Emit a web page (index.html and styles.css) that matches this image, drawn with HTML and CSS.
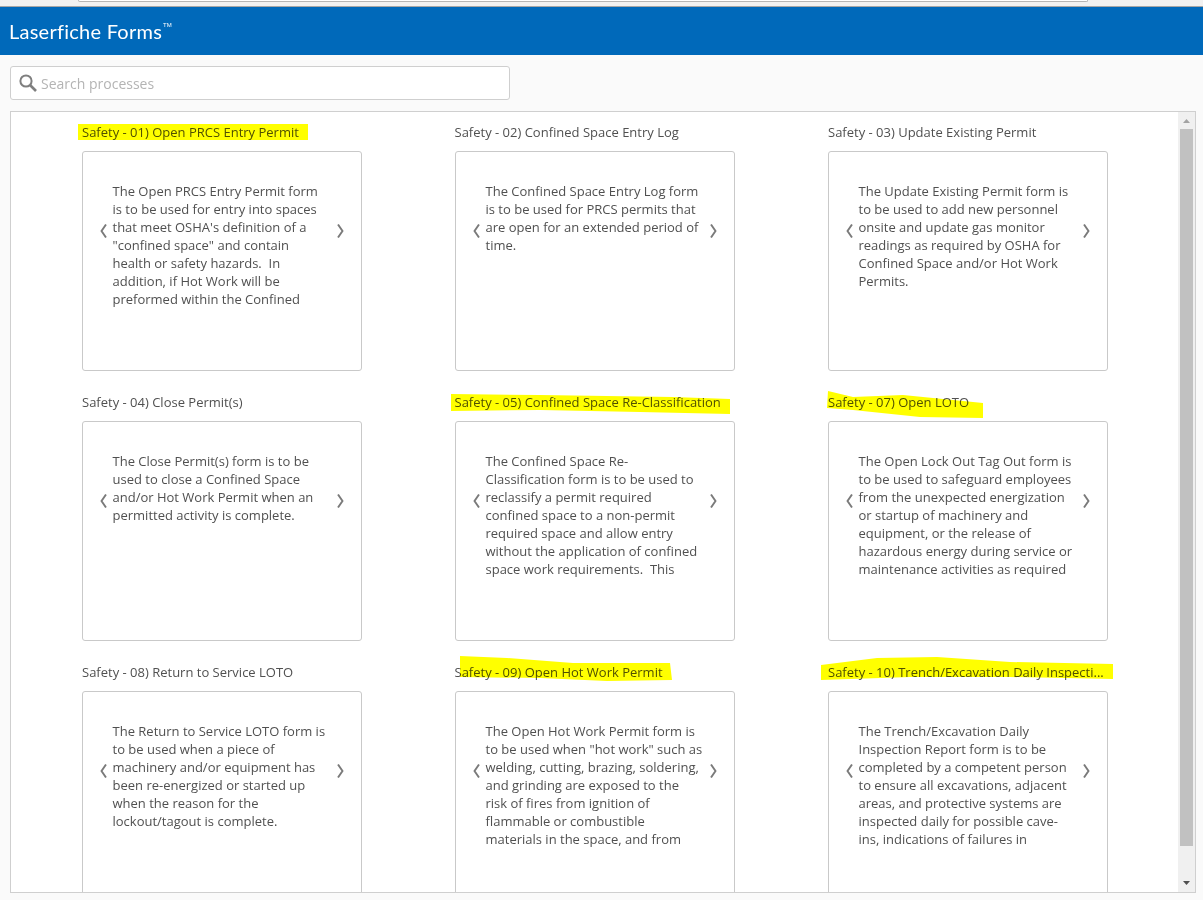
FILE: index.html
```html
<!DOCTYPE html>
<html lang="en">
<head>
<meta charset="utf-8">
<title>Laserfiche Forms</title>
<link rel="stylesheet" href="styles.css">
</head>
<body>
<div class="chrome"><div class="urlbar"></div></div>
<header class="banner"><span class="brand">Laserfiche Forms</span><sup class="tm">TM</sup></header>
<main class="page">
  <div class="search">
    <svg class="search-icon" width="20" height="20" viewBox="0 0 20 20"><circle cx="8" cy="8" r="5.6" fill="none" stroke="#7f7f7f" stroke-width="2"/><path d="M12 12l6 6" stroke="#7f7f7f" stroke-width="2.6" fill="none"/></svg>
    <span class="placeholder">Search processes</span>
  </div>
  <section class="panel">
    <div class="list">
      <div class="grid">
        <article class="item">
          <h2 class="title"><span>Safety - 01) Open PRCS Entry Permit</span><svg class="hl" viewBox="0 0 1203 900"><polygon points="78,124 308,124 308,140 78,140"/></svg></h2>
          <div class="card"><svg class="nav" width="7" height="14" viewBox="0 0 7 14"><path d="M6 0.5L1.5 7L6 13.5"/></svg><p>The Open PRCS Entry Permit form is to be used for entry into spaces that meet OSHA's definition of a "confined space" and contain health or safety hazards.&nbsp; In addition, if Hot Work will be preformed within the Confined</p><svg class="nav" width="7" height="14" viewBox="0 0 7 14"><path d="M1 0.5L5.5 7L1 13.5"/></svg></div>
        </article>
        <article class="item">
          <h2 class="title"><span>Safety - 02) Confined Space Entry Log</span></h2>
          <div class="card"><svg class="nav" width="7" height="14" viewBox="0 0 7 14"><path d="M6 0.5L1.5 7L6 13.5"/></svg><p>The Confined Space Entry Log form is to be used for PRCS permits that are open for an extended period of time.</p><svg class="nav" width="7" height="14" viewBox="0 0 7 14"><path d="M1 0.5L5.5 7L1 13.5"/></svg></div>
        </article>
        <article class="item">
          <h2 class="title"><span>Safety - 03) Update Existing Permit</span></h2>
          <div class="card"><svg class="nav" width="7" height="14" viewBox="0 0 7 14"><path d="M6 0.5L1.5 7L6 13.5"/></svg><p>The Update Existing Permit form is to be used to add new personnel onsite and update gas monitor readings as required by OSHA for Confined Space and/or Hot Work Permits.</p><svg class="nav" width="7" height="14" viewBox="0 0 7 14"><path d="M1 0.5L5.5 7L1 13.5"/></svg></div>
        </article>
        <article class="item">
          <h2 class="title"><span>Safety - 04) Close Permit(s)</span></h2>
          <div class="card"><svg class="nav" width="7" height="14" viewBox="0 0 7 14"><path d="M6 0.5L1.5 7L6 13.5"/></svg><p>The Close Permit(s) form is to be used to close a Confined Space and/or Hot Work Permit when an permitted activity is complete.</p><svg class="nav" width="7" height="14" viewBox="0 0 7 14"><path d="M1 0.5L5.5 7L1 13.5"/></svg></div>
        </article>
        <article class="item">
          <h2 class="title"><span>Safety - 05) Confined Space Re-Classification</span><svg class="hl" viewBox="0 0 1203 900"><polygon points="451,394 540,395 673,397 730,399 730,414 640,412 540,410 451,411"/></svg></h2>
          <div class="card"><svg class="nav" width="7" height="14" viewBox="0 0 7 14"><path d="M6 0.5L1.5 7L6 13.5"/></svg><p>The Confined Space Re-Classification form is to be used to reclassify a permit required confined space to a non-permit required space and allow entry without the application of confined space work requirements.&nbsp; This</p><svg class="nav" width="7" height="14" viewBox="0 0 7 14"><path d="M1 0.5L5.5 7L1 13.5"/></svg></div>
        </article>
        <article class="item">
          <h2 class="title"><span>Safety - 07) Open LOTO</span><svg class="hl" viewBox="0 0 1203 900"><polygon points="828,391 853,397 903,395 983,403 983,418 920,417 853,410 827,408"/></svg></h2>
          <div class="card"><svg class="nav" width="7" height="14" viewBox="0 0 7 14"><path d="M6 0.5L1.5 7L6 13.5"/></svg><p>The Open Lock Out Tag Out form is to be used to safeguard employees from the unexpected energization or startup of machinery and equipment, or the release of hazardous energy during service or maintenance activities as required</p><svg class="nav" width="7" height="14" viewBox="0 0 7 14"><path d="M1 0.5L5.5 7L1 13.5"/></svg></div>
        </article>
        <article class="item">
          <h2 class="title"><span>Safety - 08) Return to Service LOTO</span></h2>
          <div class="card"><svg class="nav" width="7" height="14" viewBox="0 0 7 14"><path d="M6 0.5L1.5 7L6 13.5"/></svg><p>The Return to Service LOTO form is to be used when a piece of machinery and/or equipment has been re-energized or started up when the reason for the lockout/tagout is complete.</p><svg class="nav" width="7" height="14" viewBox="0 0 7 14"><path d="M1 0.5L5.5 7L1 13.5"/></svg></div>
        </article>
        <article class="item">
          <h2 class="title"><span>Safety - 09) Open Hot Work Permit</span><svg class="hl" viewBox="0 0 1203 900"><polygon points="460,656 507,658 573,663 670,663 672,680 607,681 540,678 460,677"/></svg></h2>
          <div class="card"><svg class="nav" width="7" height="14" viewBox="0 0 7 14"><path d="M6 0.5L1.5 7L6 13.5"/></svg><p>The Open Hot Work Permit form is to be used when "hot work" such as welding, cutting, brazing, soldering, and grinding are exposed to the risk of fires from ignition of flammable or combustible materials in the space, and from</p><svg class="nav" width="7" height="14" viewBox="0 0 7 14"><path d="M1 0.5L5.5 7L1 13.5"/></svg></div>
        </article>
        <article class="item">
          <h2 class="title"><span>Safety - 10) Trench/Excavation Daily Inspecti...</span><svg class="hl" viewBox="0 0 1203 900"><polygon points="821,665 877,658 937,657 1010,662 1113,664 1113,679 1010,677 910,677 821,680"/></svg></h2>
          <div class="card"><svg class="nav" width="7" height="14" viewBox="0 0 7 14"><path d="M6 0.5L1.5 7L6 13.5"/></svg><p>The Trench/Excavation Daily Inspection Report form is to be completed by a competent person to ensure all excavations, adjacent areas, and protective systems are inspected daily for possible cave-ins, indications of failures in</p><svg class="nav" width="7" height="14" viewBox="0 0 7 14"><path d="M1 0.5L5.5 7L1 13.5"/></svg></div>
        </article>
      </div>
    </div>
    <div class="scrollbar">
      <svg class="arrow" width="7" height="4" viewBox="0 0 7 4"><path d="M3.5 0L7 4H0z" fill="#a3a3a3"/></svg>
      <div class="track"><div class="thumb"></div></div>
      <svg class="arrow" width="7" height="4" viewBox="0 0 7 4"><path d="M0 0h7L3.5 4z" fill="#505050"/></svg>
    </div>
  </section>
</main>
</body>
</html>
```
FILE: styles.css
```css
* { box-sizing: border-box; }
html, body { margin: 0; height: 900px; overflow: hidden; }
body { position: relative; background: #fafafa; font-family: "Open Sans", sans-serif; color: #505050; }
.chrome { height: 7px; background: #f1f1f1; border-bottom: 1px solid #a6a6a6; padding: 0 115px 0 78px; }
.urlbar { height: 2px; background: #fff; border: 1px solid #b5b5b5; border-top: 0; border-radius: 0 0 2px 2px; }
.banner { height: 48px; background: #0069ba; color: #fff; padding-left: 9px; display: flex; align-items: flex-start; }
.brand { font-family: Lato, "Noto Sans", sans-serif; font-size: 20px; line-height: 49px; letter-spacing: 0.25px; }
.tm { font-size: 6px; line-height: 1; margin: 15px 0 0 1px; font-family: "Liberation Sans", sans-serif; }
.page { padding: 11px 7px 0 10px; }
.search { width: 500px; height: 34px; background: #fff; border: 1px solid #cfcfcf; border-radius: 3px; display: flex; align-items: center; padding-left: 7px; gap: 3px; }
.search-icon { flex: none; }
.placeholder { font-size: 14px; color: #b4b4b4; }
.panel { margin-top: 11px; height: 782px; background: #fff; border: 1px solid #cfcfcf; display: flex; overflow: hidden; }
.list { flex: 1; overflow: hidden; padding-left: 71px; }
.grid { display: grid; grid-template-columns: repeat(3, 280px); column-gap: 93px; grid-auto-rows: 270px; }
.item { min-width: 0; }
.title { margin: 0; height: 39px; padding-top: 11px; font-size: 13px; font-weight: 400; line-height: 18px; color: #505050; white-space: nowrap; }
.title span { display: block; width: 280px; }
.hl { position: absolute; left: 0; top: 0; width: 1203px; height: 900px; pointer-events: none; fill: #ffff00; mix-blend-mode: multiply; }
.item:nth-child(3n+2) .title span { margin-left: -0.5px; }
.card { height: 220px; border: 1px solid #c9c9c9; border-radius: 3px; background: #fff; display: flex; align-items: flex-start; padding: 30px 17px 0 17px; }
.card p { flex: 1; margin: 0; font-size: 13px; line-height: 18px; color: #505050; padding: 0 7px 0 5.5px; height: 126px; overflow: hidden; }
.nav { flex: none; margin-top: 42px; fill: none; stroke: #7a7a7a; stroke-width: 1.9; }
.scrollbar { width: 17px; background: #f0f0f0; display: flex; flex-direction: column; align-items: center; padding: 7px 0; }
.track { flex: 1; width: 100%; padding: 6px 2px 0; }
.thumb { height: 717px; background: #c1c1c1; }
.arrow { flex: none; }
```
